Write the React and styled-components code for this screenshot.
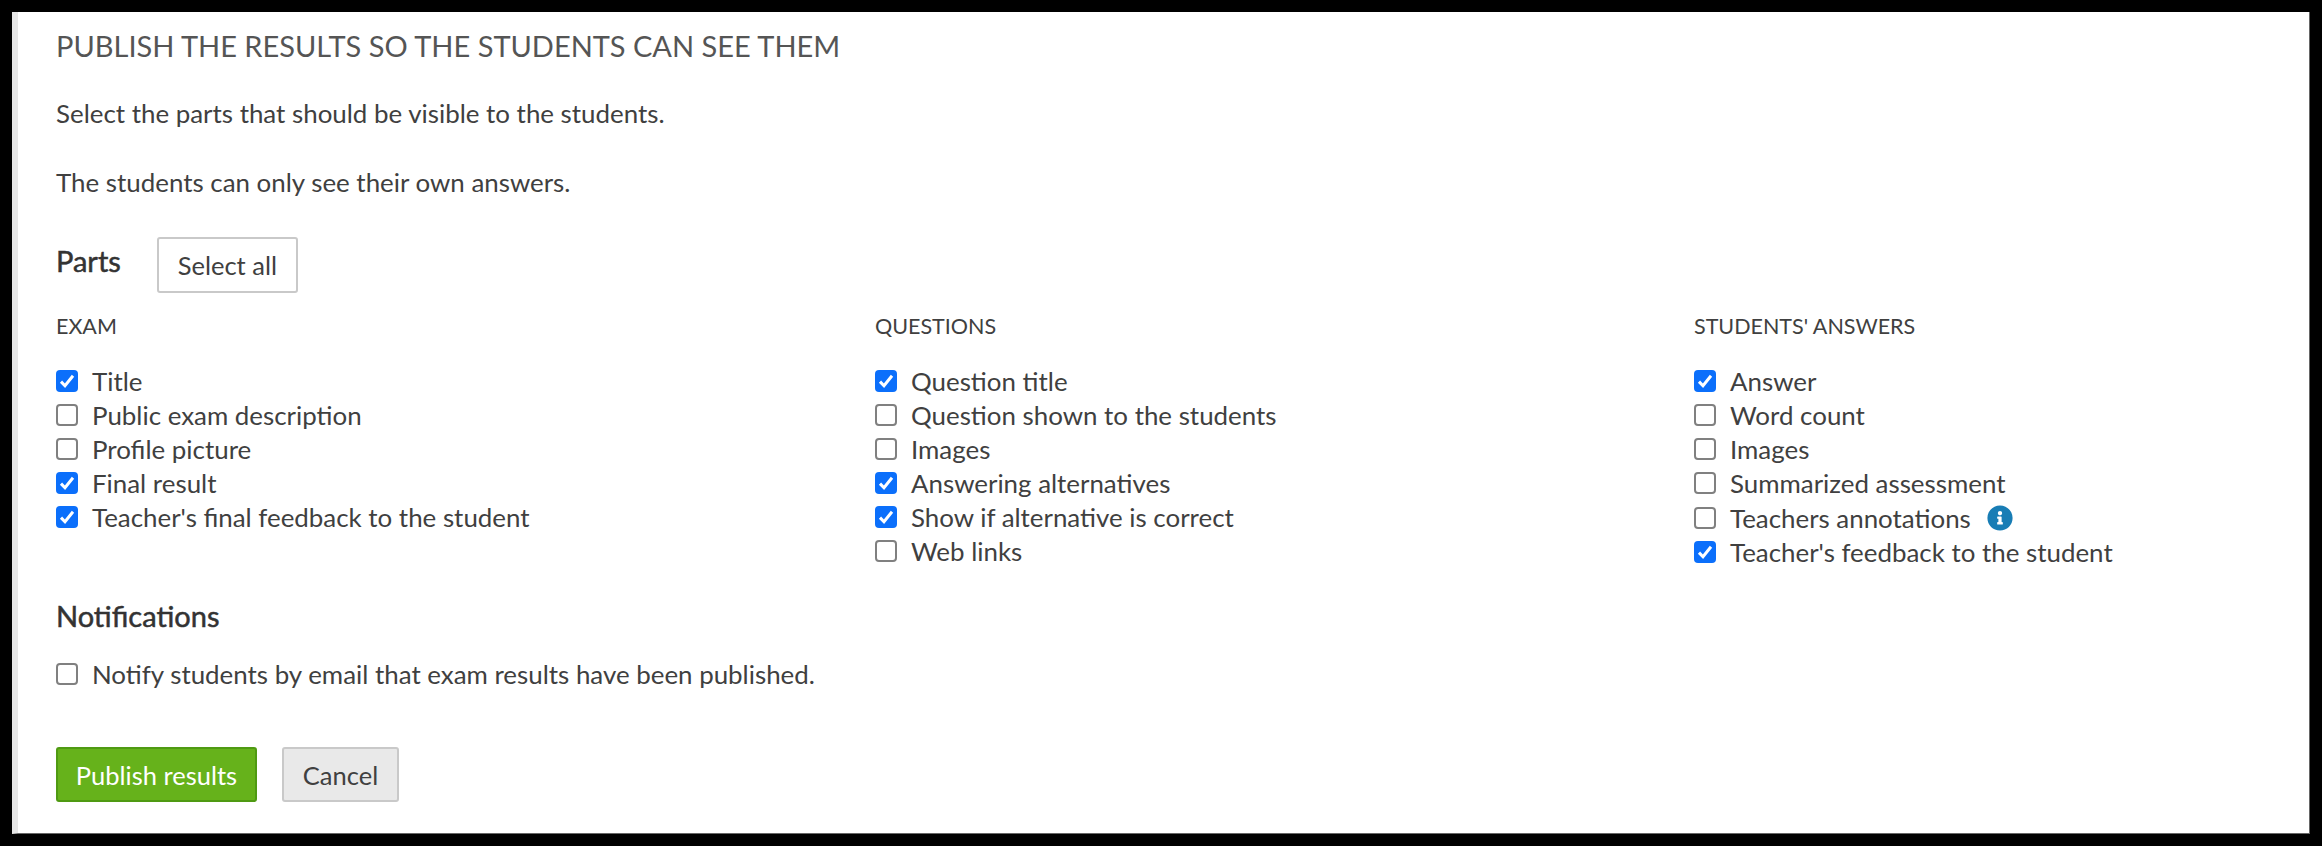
import React from 'react';
import styled, {createGlobalStyle} from 'styled-components';
import {FaInfoCircle} from 'react-icons/fa';

const GlobalStyle = createGlobalStyle`
    html, body {
        margin: 0;
        padding: 0;
        background: #000;
    }
    body {
        font-family: "Lato", "Noto Sans", sans-serif;
    }
`;

const Frame = styled.div`
    width: 2322px;
    height: 846px;
    box-sizing: border-box;
    padding: 12px;
`;

const Panel = styled.div`
    height: 822px;
    box-sizing: border-box;
    background: #fff;
    border-left: 6px solid #e6e6e6;
    border-right: 1px solid #666;
    border-bottom: 1px solid #666;
    padding: 17px 38px 0;
    color: #404040;
`;

const Title = styled.h1`
    margin: 0 0 33px;
    font-size: 29px;
    line-height: 34px;
    font-weight: 400;
    color: #555;
`;

const Intro = styled.p`
    margin: 0 0 35px;
    font-size: 25.9px;
    line-height: 34px;
`;

const PartsHeader = styled.div`
    display: flex;
    align-items: flex-start;
    gap: 36px;
    margin: 38px 0 16px;
`;

const Heading = styled.h2`
    margin: ${p => p.$margin || '0'};
    font-size: 29px;
    line-height: 48px;
    font-weight: 400;
    -webkit-text-stroke: 0.5px #333;
    color: #333;
`;

const Button = styled.button`
    width: ${p => p.$width}px;
    height: ${p => p.$height || 55}px;
    box-sizing: border-box;
    padding: 0;
    font-family: inherit;
    font-size: 25.5px;
    border-radius: 3px;
    color: ${p => p.$primary ? '#fff' : '#404040'};
    background: ${p => p.$primary ? '#66b21b' : p.$grey ? '#e9e9e9' : '#fff'};
    border: 2px solid ${p => p.$primary ? '#4f9a12' : '#c9c9c9'};
`;

const Columns = styled.div`
    display: grid;
    grid-template-columns: 819px 819px 1fr;
`;

const ColumnTitle = styled.div`
    font-size: 21.5px;
    line-height: 34px;
    margin-bottom: 21px;
`;

const Row = styled.label`
    display: flex;
    align-items: center;
    height: ${p => p.$tall ? 35 : 34}px;
    font-size: 25.9px;
`;

const BoxEl = styled.span`
    width: 22px;
    height: 22px;
    box-sizing: border-box;
    flex: none;
    margin-right: 14px;
    border-radius: 4px;
    display: flex;
    align-items: center;
    justify-content: center;
    background: ${p => p.$checked ? '#0b6ffb' : '#fff'};
    border: ${p => p.$checked ? 'none' : '2px solid #808080'};
`;

const InfoIcon = styled(FaInfoCircle)`
    margin-left: 16px;
    font-size: 26px;
    color: #187db5;
`;

const NotifyRow = styled.div`
    margin: 17px 0 56px;
`;

const Actions = styled.div`
    display: flex;
    gap: 25px;
`;

const Check = ({checked}) => (
    <BoxEl $checked={checked}>
        {checked && (
            <svg width="18" height="18" viewBox="0 0 18 18">
                <path d="M3 9.6 L7 13.8 L15 3.8" fill="none" stroke="#fff" strokeWidth="3" />
            </svg>
        )}
    </BoxEl>
);

const columns = [
    {
        title: 'EXAM',
        items: [
            ['Title', true],
            ['Public exam description', false],
            ['Profile picture', false],
            ['Final result', true],
            ["Teacher's final feedback to the student", true],
        ],
    },
    {
        title: 'QUESTIONS',
        items: [
            ['Question title', true],
            ['Question shown to the students', false],
            ['Images', false],
            ['Answering alternatives', true],
            ['Show if alternative is correct', true],
            ['Web links', false],
        ],
    },
    {
        title: "STUDENTS' ANSWERS",
        items: [
            ['Answer', true],
            ['Word count', false],
            ['Images', false],
            ['Summarized assessment', false],
            ['Teachers annotations', false, true],
            ["Teacher's feedback to the student", true],
        ],
    },
];

const App = () => (
    <Frame>
        <GlobalStyle />
        <Panel>
            <Title>PUBLISH THE RESULTS SO THE STUDENTS CAN SEE THEM</Title>
            <Intro>Select the parts that should be visible to the students.</Intro>
            <Intro>The students can only see their own answers.</Intro>
            <PartsHeader>
                <Heading>Parts</Heading>
                <Button $width={141} $height={56}>Select all</Button>
            </PartsHeader>
            <Columns>
                {columns.map(col => (
                    <div key={col.title}>
                        <ColumnTitle>{col.title}</ColumnTitle>
                        {col.items.map(([label, checked, info]) => (
                            <Row key={label} $tall={info}>
                                <Check checked={checked} />
                                {label}
                                {info && <InfoIcon />}
                            </Row>
                        ))}
                    </div>
                ))}
            </Columns>
            <Heading $margin="23px 0 0">Notifications</Heading>
            <NotifyRow>
                <Row>
                    <Check />
                    Notify students by email that exam results have been published.
                </Row>
            </NotifyRow>
            <Actions>
                <Button $primary $width={201}>Publish results</Button>
                <Button $grey $width={117}>Cancel</Button>
            </Actions>
        </Panel>
    </Frame>
);

export default App;
